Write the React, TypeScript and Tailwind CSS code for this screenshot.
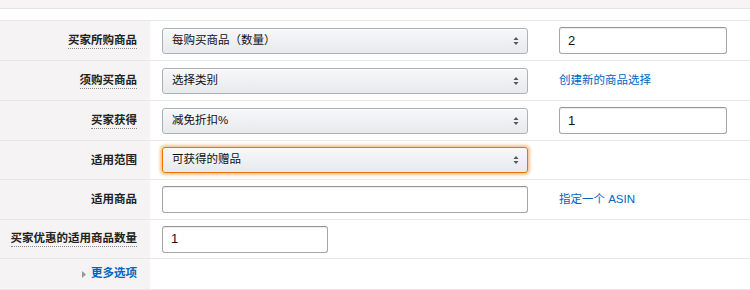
import React from "react";

const font = { fontFamily: '"Liberation Sans", "Noto Sans CJK SC", sans-serif' };

function Arrows() {
  return (
    <svg width="6" height="9" viewBox="0 0 6 9" className="absolute right-[8px] top-1/2 -translate-y-1/2">
      <path d="M3 0.5 L5.5 3.5 L0.5 3.5 Z" fill="#555" />
      <path d="M3 8.5 L5.5 5.5 L0.5 5.5 Z" fill="#555" />
    </svg>
  );
}

function Select({ text, focus = false }: { text: string; focus?: boolean }) {
  return (
    <div
      className={
        "relative flex h-[26px] w-[366px] items-center rounded-[3px] border bg-gradient-to-b from-[#f7f8fa] to-[#e7e9ec] pl-[9px] text-[11.5px] text-[#111] " +
        (focus
          ? "border-[#e77600] shadow-[0_0_3px_2px_rgba(228,121,17,0.45)]"
          : "border-[#adb1b8] shadow-[0_1px_0_rgba(255,255,255,0.6)_inset]")
      }
    >
      {text}
      <Arrows />
    </div>
  );
}

function Input({ value, w }: { value: string; w: string }) {
  return (
    <div
      className={
        "flex h-[27px] items-center rounded-[3px] border border-[#a6a6a6] border-t-[#949494] bg-white pl-[8px] text-[13px] text-[#111] shadow-[0_1px_0_rgba(0,0,0,0.07)_inset] " +
        w
      }
    >
      {value}
    </div>
  );
}

function Label({ text, dotted = true }: { text: string; dotted?: boolean }) {
  return (
    <span
      className={
        "text-[11.5px] font-bold leading-[15px] text-[#222] " +
        (dotted ? "border-b border-dotted border-[#888]" : "")
      }
    >
      {text}
    </span>
  );
}

function Row({
  h,
  label,
  children,
  last = false,
}: {
  h: string;
  label: React.ReactNode;
  children?: React.ReactNode;
  last?: boolean;
}) {
  return (
    <div className={"flex border-b border-[#e7e7e7] " + h + (last ? "" : "")}>
      <div className="flex w-[150px] shrink-0 items-center justify-end bg-[#f6f3f5] pr-[13px]">{label}</div>
      <div className="flex flex-1 items-center pl-[12px]">{children}</div>
    </div>
  );
}

export default function App() {
  return (
    <div className="h-[290px] w-[750px] overflow-hidden bg-white" style={font}>
      <div className="h-[9px] border-b border-[#e6e2e4] bg-[#f8f4f6]" />
      <div className="h-[12px] border-b border-[#e7e7e7] bg-white" />
      <Row h="h-[40px]" label={<Label text="买家所购商品" />}>
        <Select text="每购买商品（数量）" />
        <div className="ml-[31px]">
          <Input value="2" w="w-[168px]" />
        </div>
      </Row>
      <Row h="h-[40px]" label={<Label text="须购买商品" />}>
        <Select text="选择类别" />
        <a className="ml-[31px] text-[11.5px] text-[#0066c0]">创建新的商品选择</a>
      </Row>
      <Row h="h-[40px]" label={<Label text="买家获得" />}>
        <Select text="减免折扣%" />
        <div className="ml-[31px]">
          <Input value="1" w="w-[168px]" />
        </div>
      </Row>
      <Row h="h-[39px]" label={<Label text="适用范围" dotted={false} />}>
        <Select text="可获得的赠品" focus />
      </Row>
      <Row h="h-[40px]" label={<Label text="适用商品" dotted={false} />}>
        <Input value="" w="w-[366px]" />
        <a className="ml-[31px] text-[11.5px] text-[#0066c0]">指定一个 ASIN</a>
      </Row>
      <Row h="h-[39px]" label={<Label text="买家优惠的适用商品数量" />}>
        <Input value="1" w="w-[166px]" />
      </Row>
      <Row
        h="h-[31px]"
        label={
          <span className="flex items-center gap-[5px] text-[11.5px] font-bold text-[#0066c0]">
            <svg width="4" height="7" viewBox="0 0 4 7">
              <path d="M0 0 L4 3.5 L0 7 Z" fill="#999" />
            </svg>
            更多选项
          </span>
        }
      />
    </div>
  );
}
